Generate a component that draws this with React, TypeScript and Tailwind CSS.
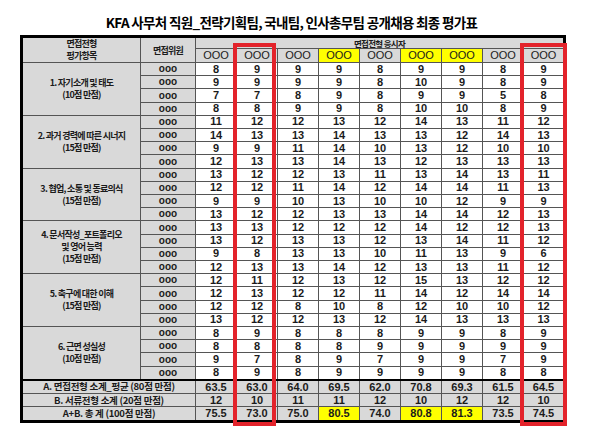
import React from 'react';

const font = { fontFamily: '"Noto Sans CJK KR", "Noto Sans", sans-serif' };
const num = { fontFamily: '"Liberation Sans", Arial, sans-serif' };

const yellowNames = [3, 5, 6];
const yellowTotals = [3, 5, 6];

const sections: { label: string[]; rows: number[][] }[] = [
  {
    label: ['1. 자기소개 및 태도', '(10점 만점)'],
    rows: [
      [8, 9, 9, 9, 8, 9, 9, 8, 9],
      [9, 9, 9, 9, 8, 10, 9, 8, 9],
      [7, 7, 8, 9, 8, 9, 9, 5, 8],
      [8, 8, 9, 9, 8, 10, 10, 8, 9],
    ],
  },
  {
    label: ['2. 과거 경력에 따른 시너지', '(15점 만점)'],
    rows: [
      [11, 12, 12, 13, 12, 14, 13, 11, 12],
      [14, 13, 13, 14, 13, 13, 12, 14, 13],
      [9, 9, 11, 14, 10, 13, 12, 10, 10],
      [12, 13, 13, 14, 13, 12, 13, 13, 13],
    ],
  },
  {
    label: ['3. 협업, 소통 및 동료의식', '(15점 만점)'],
    rows: [
      [13, 12, 12, 13, 11, 13, 14, 13, 11],
      [12, 12, 11, 14, 12, 14, 14, 11, 13],
      [9, 9, 10, 13, 10, 10, 12, 9, 9],
      [13, 12, 12, 13, 13, 14, 14, 12, 13],
    ],
  },
  {
    label: ['4. 문서작성_포트폴리오', '및 영어 능력', '(15점 만점)'],
    rows: [
      [13, 13, 12, 12, 12, 14, 12, 12, 13],
      [13, 12, 13, 13, 12, 13, 14, 11, 12],
      [9, 8, 13, 13, 10, 11, 13, 9, 6],
      [12, 13, 13, 14, 12, 13, 13, 11, 12],
    ],
  },
  {
    label: ['5. 축구에 대한 이해', '(15점 만점)'],
    rows: [
      [12, 11, 12, 13, 12, 15, 13, 12, 12],
      [12, 13, 12, 12, 11, 14, 12, 14, 14],
      [12, 12, 8, 10, 8, 12, 10, 10, 12],
      [13, 12, 12, 13, 12, 14, 13, 13, 13],
    ],
  },
  {
    label: ['6. 근면 성실성', '(10점 만점)'],
    rows: [
      [8, 9, 8, 8, 8, 9, 9, 8, 9],
      [8, 8, 8, 8, 9, 9, 9, 9, 9],
      [9, 7, 8, 9, 7, 9, 9, 7, 9],
      [8, 9, 8, 9, 9, 9, 9, 8, 8],
    ],
  },
];

const summary = [
  { label: 'A. 면접전형 소계_평균 (80점 만점)', values: ['63.5', '63.0', '64.0', '69.5', '62.0', '70.8', '69.3', '61.5', '64.5'], yellow: [] as number[] },
  { label: 'B. 서류전형 소계 (20점 만점)', values: ['12', '10', '11', '11', '12', '10', '12', '12', '10'], yellow: [] as number[] },
  { label: 'A+B. 총 계 (100점 만점)', values: ['75.5', '73.0', '75.0', '80.5', '74.0', '80.8', '81.3', '73.5', '74.5'], yellow: yellowTotals },
];

const cell = 'border border-[#555] p-0 text-center align-middle';

export default function App() {
  return (
    <div className="w-[607px] h-[448px] bg-white text-[#1b1b1b]" style={font}>
      <div className="relative ml-[20px] w-[543px] pt-[13px]">
        <h1 className="h-[18px] text-center text-[13.5px] font-bold leading-[18px] tracking-[-0.05em] text-black">
          KFA 사무처 직원_전략기획팀, 국내팀, 인사총무팀 공개채용 최종 평가표
        </h1>
        <table className="mt-[4px] h-[387px] w-[543px] table-fixed border-collapse border-[3px] border-black">
          <colgroup>
            <col className="w-[119px]" />
            <col className="w-[55px]" />
            {Array.from({ length: 9 }).map((_, i) => (
              <col key={i} className="w-[41px]" />
            ))}
          </colgroup>
          <thead>
            <tr className="h-[12px]">
              <th rowSpan={2} className={`${cell} bg-[#d9d9d9] text-[9px] font-bold leading-[12px] tracking-[-0.08em]`}>
                면접전형
                <br />
                평가항목
              </th>
              <th rowSpan={2} className={`${cell} bg-[#d9d9d9] text-[9px] font-bold leading-none tracking-[-0.08em]`}>
                면접위원
              </th>
              <th colSpan={9} className={`${cell} bg-[#d9d9d9] text-[8.5px] font-bold leading-none tracking-[-0.08em]`}>
                면접전형 응시자
              </th>
            </tr>
            <tr className="h-[13px]">
              {Array.from({ length: 9 }).map((_, i) => (
                <th
                  key={i}
                  style={num}
                  className={`${cell} text-[11px] font-normal leading-none ${yellowNames.includes(i) ? 'bg-[#ffff00]' : 'bg-[#d9d9d9]'}`}
                >
                  OOO
                </th>
              ))}
            </tr>
          </thead>
          <tbody>
            {sections.map((s, si) =>
              s.rows.map((r, ri) => (
                <tr key={`${si}-${ri}`} className="h-[12px]">
                  {ri === 0 && (
                    <td rowSpan={4} className={`${cell} bg-[#d9d9d9] text-[9px] font-bold leading-[12px] tracking-[-0.08em]`}>
                      {s.label.map((l, li) => (
                        <div key={li}>{l}</div>
                      ))}
                    </td>
                  )}
                  <td style={num} className={`${cell} bg-[#d9d9d9] text-[10px] font-bold leading-none`}>
                    ooo
                  </td>
                  {r.map((v, ci) => (
                    <td key={ci} style={num} className={`${cell} bg-white text-[11px] font-bold leading-none`}>
                      {v}
                    </td>
                  ))}
                </tr>
              ))
            )}
            {summary.map((row, i) => (
              <tr key={row.label} className="h-[12px]">
                <td
                  colSpan={2}
                  className={`${cell} bg-[#d9d9d9] text-[9.5px] font-bold leading-none tracking-[-0.03em] ${i === 0 ? 'border-t-2 border-t-black' : ''}`}
                >
                  {row.label}
                </td>
                {row.values.map((v, ci) => (
                  <td
                    key={ci}
                    style={num}
                    className={`${cell} text-[11px] font-bold leading-none ${row.yellow.includes(ci) ? 'bg-[#ffff00]' : 'bg-[#d9d9d9]'} ${i === 0 ? 'border-t-2 border-t-black' : ''}`}
                  >
                    {v}
                  </td>
                ))}
              </tr>
            ))}
          </tbody>
        </table>
        <div className="pointer-events-none absolute left-[213px] top-[43px] h-[383px] w-[43px] border-4 border-[#e3232b]" />
        <div className="pointer-events-none absolute left-[500px] top-[43px] h-[383px] w-[47px] border-4 border-[#e3232b]" />
      </div>
    </div>
  );
}
